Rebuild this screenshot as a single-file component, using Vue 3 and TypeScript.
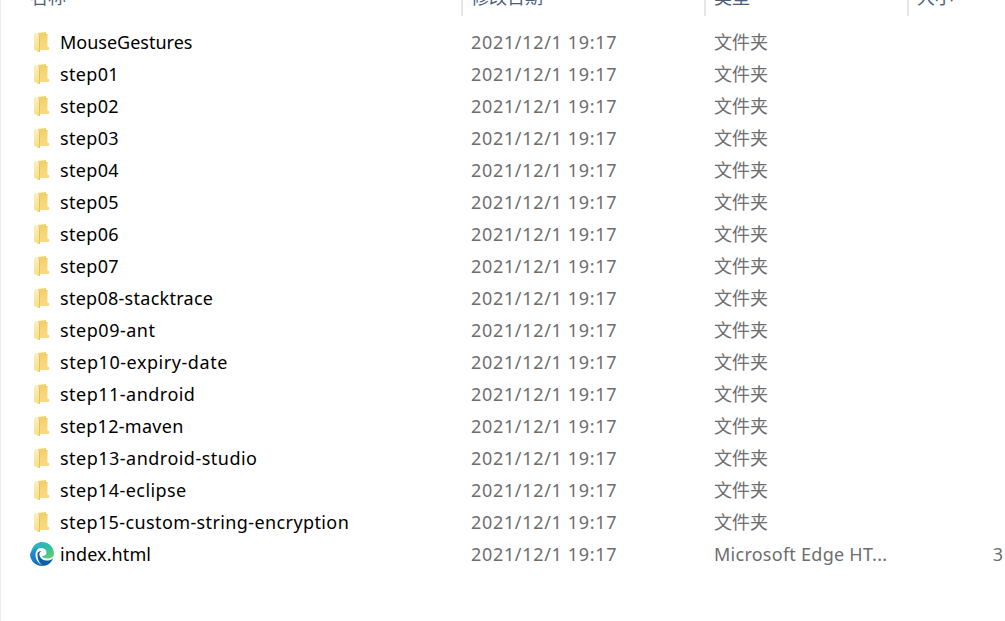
<script setup lang="ts">
interface Item { name: string; spacing: number }
const items: Item[] = [
  { name: 'MouseGestures', spacing: 0 },
  { name: 'step01', spacing: 0.33 },
  { name: 'step02', spacing: 0.33 },
  { name: 'step03', spacing: 0.33 },
  { name: 'step04', spacing: 0.33 },
  { name: 'step05', spacing: 0.33 },
  { name: 'step06', spacing: 0.33 },
  { name: 'step07', spacing: 0.33 },
  { name: 'step08-stacktrace', spacing: 0.27 },
  { name: 'step09-ant', spacing: 0.5 },
  { name: 'step10-expiry-date', spacing: 0.55 },
  { name: 'step11-android', spacing: 0.48 },
  { name: 'step12-maven', spacing: 0.3 },
  { name: 'step13-android-studio', spacing: 0.48 },
  { name: 'step14-eclipse', spacing: 0.43 },
  { name: 'step15-custom-string-encryption', spacing: 0.39 },
]
</script>

<template>
  <div class="win">
    <svg width="0" height="0" class="defs">
      <defs>
        <linearGradient id="flap" x1="0" y1="0" x2="0" y2="1">
          <stop offset="0" stop-color="#fff0b8" />
          <stop offset="1" stop-color="#f9dc8a" />
        </linearGradient>
        <linearGradient id="body" x1="0" y1="0" x2="0" y2="1">
          <stop offset="0" stop-color="#f3cf6e" />
          <stop offset="1" stop-color="#f9db80" />
        </linearGradient>
        <linearGradient id="eg1" x1="0" y1="0" x2="1" y2="1">
          <stop offset="0" stop-color="#28aed6" />
          <stop offset="0.55" stop-color="#2fc0a0" />
          <stop offset="1" stop-color="#72d35e" />
        </linearGradient>
        <linearGradient id="eg2" x1="0" y1="0" x2="0" y2="1">
          <stop offset="0" stop-color="#1f9ad6" />
          <stop offset="1" stop-color="#0f6fbd" />
        </linearGradient>
      </defs>
    </svg>
    <div class="head">
      <div class="hc first">名称</div>
      <div class="hc date">修改日期</div>
      <div class="hc type">类型</div>
      <div class="hc size">大小</div>
    </div>
    <div class="list">
      <div v-for="it in items" :key="it.name" class="row">
        <div class="name">
          <svg class="icon" width="24" height="24" viewBox="0 0 24 24">
            <path d="M8 3 L16 2 L16 4 L17.500 4 L17.500 17 L19 17 L19 20 L8 20 Z" fill="url(#body)" />
            <path d="M4 3 L9.500 5 L9.500 22 L8 22 L4 19.500 Z" fill="url(#flap)" />
            <path d="M9.500 5 L9.500 22" stroke="#e3b950" stroke-width="0.8" />
          </svg>
          <span class="label" :style="{ letterSpacing: it.spacing + 'px' }">{{ it.name }}</span>
        </div>
        <div class="date cell">2021/12/1 19:17</div>
        <div class="type cell cjk">文件夹</div>
        <div class="size cell"></div>
      </div>
      <div class="row">
        <div class="name">
          <svg class="icon edge" width="24" height="24" viewBox="0 0 24 24">
            <path d="M12 0 C19 0 24 5 24 12 C24 15 21 16.500 17 16.500 C14 16.500 12 15.500 12 14 C15 14 16.500 12.500 16.500 10.500 C16.500 7.500 14 6 11 6 C6 6 3 9 1 12 C1 5 6 0 12 0 Z" fill="url(#eg1)" />
            <path d="M0 12 C1.500 8 5.500 5.500 9.500 5.500 C6.500 7.500 5.500 10 5.500 13 C5.500 18 9 22.500 14.500 23.800 C13.500 24 12.800 24 12 24 C5.500 24 0 18.500 0 12 Z" fill="url(#eg2)" />
            <path d="M7.500 11 C8.500 9.500 10 9 11.500 9.500 C9.500 10 9 11.500 9.500 13.500 C10.500 17 14 19 18 18.500 C20 18.200 22 17.200 23 16.500 C21.500 20.500 18 23.500 14.500 23.800 C10.500 23.500 7 18 7.500 11 Z" fill="#115ea8" />
          </svg>
          <span class="label last">index.html</span>
        </div>
        <div class="date cell">2021/12/1 19:17</div>
        <div class="type cell edge-type">Microsoft Edge HT...</div>
        <div class="size cell">3</div>
      </div>
    </div>
  </div>
</template>

<style>
html, body { margin: 0; background: #fff; overflow: hidden; }
</style>

<style scoped>
.win {
  width: 1005px;
  height: 621px;
  box-sizing: border-box;
  border-left: 1px solid #eeeeee;
  overflow: hidden;
  background: #fff;
  font-family: "Noto Sans", "Noto Sans CJK SC", sans-serif;
  font-size: 18px;
}
.defs { display: block; }
.head {
  display: grid;
  grid-template-columns: 460px 243px 203px 1fr;
  height: 16px;
  overflow: hidden;
}
.hc {
  height: 16px;
  display: flex;
  align-items: flex-end;
  padding-bottom: 7px;
  box-sizing: border-box;
  color: #4c607a;
  line-height: 24px;
  white-space: nowrap;
  border-left: 2px solid #e5e5e5;
  padding-left: 8px;
}
.hc.first { border-left: 0; padding-left: 29px; }
.list { padding-top: 10px; }
.row {
  display: grid;
  grid-template-columns: 460px 243px 203px 1fr;
  height: 32px;
  align-items: center;
}
.name { display: flex; align-items: center; padding-left: 29px; height: 32px; }
.icon { flex: none; }
.label { margin-left: 6px; color: #000; white-space: nowrap; }
.label.last { letter-spacing: 0.1px; }
.cell { color: #6d6d6d; white-space: nowrap; padding-left: 10px; }
.date.cell { letter-spacing: 0.67px; }
.cjk { padding-bottom: 2px; }
.edge-type { letter-spacing: 0.26px; }
.size.cell { text-align: right; padding-right: 2px; }
</style>
